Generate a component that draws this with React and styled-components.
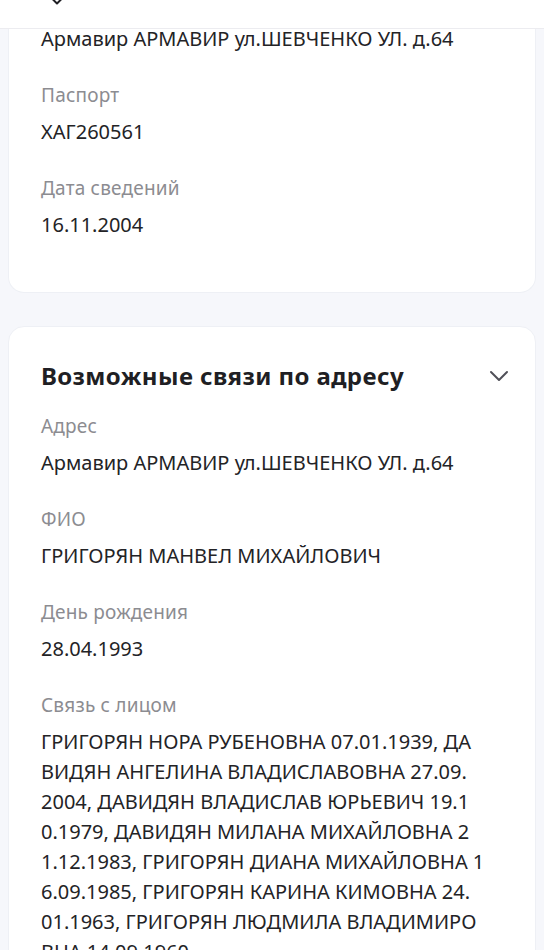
import React from "react";
import styled, { createGlobalStyle } from "styled-components";

const GlobalStyle = createGlobalStyle`
  html, body {
    margin: 0;
    padding: 0;
    background: #f6f7fb;
  }
  body {
    font-family: "Noto Sans", "Open Sans", sans-serif;
    color: #222226;
    overflow: hidden;
  }
`;

const Page = styled.div`
  width: 544px;
  height: 950px;
  overflow: hidden;
  background: #f6f7fb;
`;

const Header = styled.div`
  height: 28px;
  background: #ffffff;
  border-bottom: 1px solid #ececf0;
  display: flex;
  align-items: flex-start;
  padding-left: 47px;
  overflow: hidden;
`;

const HeaderIcon = styled.svg`
  margin-top: -9px;
  flex: none;
`;

const Stack = styled.div`
  display: flex;
  flex-direction: column;
  gap: 33px;
  padding: 0 8px;
`;

const Card = styled.div`
  background: #ffffff;
  border: 1px solid #eef0f5;
  border-radius: ${(p) => (p.$cut ? "0 0 16px 16px" : "16px")};
  border-top: ${(p) => (p.$cut ? "none" : "1px solid #eef0f5")};
  padding: ${(p) => (p.$cut ? "0 32px 52px" : "34px 32px 40px")};
`;

const TitleRow = styled.div`
  display: flex;
  align-items: center;
  justify-content: space-between;
  margin-bottom: 23px;
`;

const Title = styled.h2`
  margin: 0;
  font-size: 24px;
  line-height: 30px;
  font-weight: 700;
  letter-spacing: 0.4px;
  color: #1f1f24;
`;

const Chevron = styled.svg`
  margin-right: -8px;
  flex: none;
`;

const Field = styled.div`
  display: flex;
  flex-direction: column;
  gap: 10px;
  & + & {
    margin-top: 29px;
  }
`;

const Label = styled.div`
  font-size: 19px;
  line-height: 24px;
  letter-spacing: 0.2px;
  color: #8c8c91;
`;

const Value = styled.div`
  font-size: 20px;
  line-height: 30px;
  color: #232326;
  margin-top: ${(p) => (p.$lifted ? "-5px" : "0")};
`;

const Line = styled.span`
  display: block;
  white-space: nowrap;
`;

const relatives = [
  "ГРИГОРЯН НОРА РУБЕНОВНА 07.01.1939, ДА",
  "ВИДЯН АНГЕЛИНА ВЛАДИСЛАВОВНА 27.09.",
  "2004, ДАВИДЯН ВЛАДИСЛАВ ЮРЬЕВИЧ 19.1",
  "0.1979, ДАВИДЯН МИЛАНА МИХАЙЛОВНА 2",
  "1.12.1983, ГРИГОРЯН ДИАНА МИХАЙЛОВНА 1",
  "6.09.1985, ГРИГОРЯН КАРИНА КИМОВНА 24.",
  "01.1963, ГРИГОРЯН ЛЮДМИЛА ВЛАДИМИРО",
  "ВНА 14.09.1960",
];

export default function App() {
  return (
    <Page>
      <GlobalStyle />
      <Header>
        <HeaderIcon width="20" height="20" viewBox="0 0 24 24" fill="none">
          <path
            d="M6 9l6 6 6-6"
            stroke="#1f1f24"
            strokeWidth="2.4"
            strokeLinecap="round"
            strokeLinejoin="round"
          />
        </HeaderIcon>
      </Header>
      <Stack>
        <Card $cut>
          <Field>
            <Value $lifted>Армавир АРМАВИР ул.ШЕВЧЕНКО УЛ. д.64</Value>
          </Field>
          <Field>
            <Label>Паспорт</Label>
            <Value>ХАГ260561</Value>
          </Field>
          <Field>
            <Label>Дата сведений</Label>
            <Value>16.11.2004</Value>
          </Field>
        </Card>
        <Card>
          <TitleRow>
            <Title>Возможные связи по адресу</Title>
            <Chevron width="24" height="24" viewBox="0 0 24 24" fill="none">
              <path
                d="M4 8l8 8 8-8"
                stroke="#505058"
                strokeWidth="2"
                strokeLinecap="round"
                strokeLinejoin="round"
              />
            </Chevron>
          </TitleRow>
          <Field>
            <Label>Адрес</Label>
            <Value>Армавир АРМАВИР ул.ШЕВЧЕНКО УЛ. д.64</Value>
          </Field>
          <Field>
            <Label>ФИО</Label>
            <Value>ГРИГОРЯН МАНВЕЛ МИХАЙЛОВИЧ</Value>
          </Field>
          <Field>
            <Label>День рождения</Label>
            <Value>28.04.1993</Value>
          </Field>
          <Field>
            <Label>Связь с лицом</Label>
            <Value>
              {relatives.map((line) => (
                <Line key={line}>{line}</Line>
              ))}
            </Value>
          </Field>
        </Card>
      </Stack>
    </Page>
  );
}
